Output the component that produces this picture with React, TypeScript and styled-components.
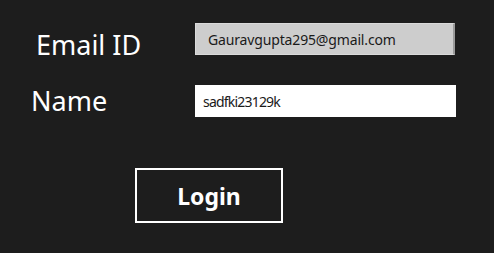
import { createGlobalStyle } from "styled-components";
import styled from "styled-components";

const Global = createGlobalStyle`
  html, body {
    margin: 0;
    padding: 0;
    background: #1d1d1d;
  }
  body {
    font-family: "Noto Sans", "Open Sans", sans-serif;
  }
`;

const Page = styled.div`
  width: 494px;
  height: 253px;
  box-sizing: border-box;
  padding-top: 23px;
  display: flex;
  flex-direction: column;
  background: #1d1d1d;
`;

const Form = styled.div`
  display: grid;
  grid-template-columns: 195px 261px;
  grid-auto-rows: 32px;
  row-gap: 30px;
`;

const Label = styled.div<{ $indent: number; $shift: number }>`
  padding-left: ${(p) => p.$indent}px;
  padding-top: ${(p) => p.$shift}px;
  color: #ffffff;
  font-size: 27px;
  line-height: 32px;
  white-space: nowrap;
`;

const Field = styled.div<{ $readOnly?: boolean; $pad: number; $track: number }>`
  box-sizing: border-box;
  height: 32px;
  padding-left: ${(p) => p.$pad}px;
  display: flex;
  align-items: center;
  font-size: 14px;
  letter-spacing: ${(p) => p.$track}px;
  color: #1a1a1a;
  background: ${(p) => (p.$readOnly ? "#cdcdcd" : "#ffffff")};
  border: ${(p) => (p.$readOnly ? "1px solid #dadada" : "none")};
  border-right: ${(p) => (p.$readOnly ? "2px solid #9a9a9a" : "none")};
  width: ${(p) => (p.$readOnly ? "260px" : "261px")};
`;

const Login = styled.button`
  margin-top: 51px;
  margin-left: 135px;
  width: 148px;
  height: 55px;
  box-sizing: border-box;
  border: 2px solid #ffffff;
  background: transparent;
  color: #ffffff;
  font-family: "Noto Sans", "Open Sans", sans-serif;
  font-weight: 700;
  font-size: 23px;
  padding: 0;
  cursor: pointer;
`;

export default function App() {
  return (
    <>
      <Global />
      <Page>
        <Form>
          <Label $indent={36} $shift={6}>Email ID</Label>
          <Field $readOnly $pad={12} $track={-0.15}>Gauravgupta295@gmail.com</Field>
          <Label $indent={31} $shift={0}>Name</Label>
          <Field $pad={8} $track={-0.8}>sadfki23129k</Field>
        </Form>
        <Login>Login</Login>
      </Page>
    </>
  );
}
